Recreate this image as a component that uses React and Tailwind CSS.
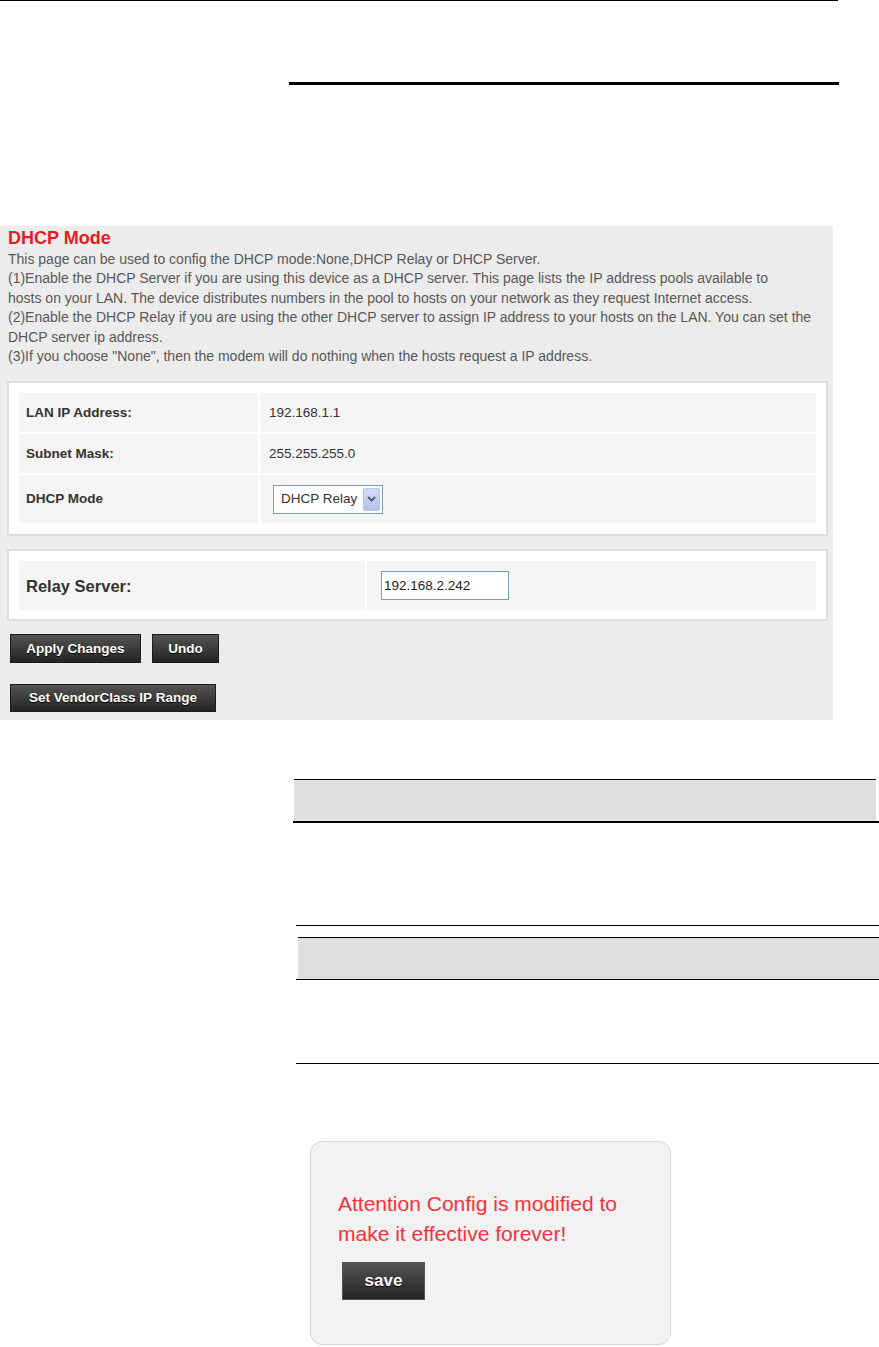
import React from "react";

const descLines = [
    "This page can be used to config the DHCP mode:None,DHCP Relay or DHCP Server.",
    "(1)Enable the DHCP Server if you are using this device as a DHCP server. This page lists the IP address pools available to",
    "hosts on your LAN. The device distributes numbers in the pool to hosts on your network as they request Internet access.",
    "(2)Enable the DHCP Relay if you are using the other DHCP server to assign IP address to your hosts on the LAN. You can set the",
    "DHCP server ip address.",
    '(3)If you choose "None", then the modem will do nothing when the hosts request a IP address.',
];

const DarkButton = ({ children, className = "" }) => (
    <button
        className={`flex items-center justify-center border border-[#1c1c1c] bg-linear-to-b from-[#545454] to-[#242424] text-white font-bold [text-shadow:0_1px_0_#000] ${className}`}
    >
        {children}
    </button>
);

const App = () => {
    return (
        <div className="w-[879px] h-[1347px] bg-white overflow-hidden font-['Liberation_Sans',Arial,sans-serif]">
            {/* Page rules */}
            <div className="h-px w-[838px] bg-black" />
            <div className="mt-[81px] ml-[289px] w-[550px] h-[3px] bg-black" />

            {/* DHCP Mode panel */}
            <div className="mt-[141px] w-[833px] h-[494px] bg-[#ececec]">
                <h1 className="pl-[8px] text-[18px] leading-[24px] font-bold text-[#e31b23]">DHCP Mode</h1>
                <div className="pl-[8px] text-[14px] leading-[19.4px] text-[#585858] whitespace-nowrap">
                    {descLines.map((line, i) => (
                        <div key={i}>{line}</div>
                    ))}
                </div>

                {/* LAN info */}
                <div className="mt-[15px] ml-[7px] w-[821px] border-2 border-[#dddddd] bg-white px-[10px] pt-[10px] pb-[11px]">
                    <div className="grid grid-cols-[239px_1fr] gap-[2px] text-[13.5px] text-[#333]">
                        <div className="h-[39px] bg-[#f5f5f5] pl-[7px] flex items-center font-bold">LAN IP Address:</div>
                        <div className="h-[39px] bg-[#f5f5f5] pl-[9px] flex items-center">192.168.1.1</div>
                        <div className="h-[39px] bg-[#f5f5f5] pl-[7px] flex items-center font-bold">Subnet Mask:</div>
                        <div className="h-[39px] bg-[#f5f5f5] pl-[9px] flex items-center">255.255.255.0</div>
                        <div className="h-[48px] bg-[#f5f5f5] pl-[7px] flex items-center font-bold">DHCP Mode</div>
                        <div className="h-[48px] bg-[#f5f5f5] pl-[13px] flex items-center">
                            <div className="relative w-[110px] h-[29px] border border-[#7f9db9] bg-white overflow-hidden flex items-center pl-[7px]">
                                <span className="whitespace-nowrap">DHCP Relay</span>
                                <div className="absolute right-[2px] top-[2px] w-[17px] h-[23px] rounded-[2px] border border-[#b8c6e6] bg-linear-to-b from-[#d3ddf4] to-[#b2c2ea] flex items-center justify-center">
                                    <svg width="9" height="6" viewBox="0 0 9 6">
                                        <path d="M1 1 L4.5 4.5 L8 1" fill="none" stroke="#4d6185" strokeWidth="2" />
                                    </svg>
                                </div>
                            </div>
                        </div>
                    </div>
                </div>

                {/* Relay server */}
                <div className="mt-[13px] ml-[7px] w-[821px] border-2 border-[#dddddd] bg-white px-[10px] pt-[10px] pb-[9px]">
                    <div className="grid grid-cols-[346px_1fr] gap-[2px] text-[#333]">
                        <div className="h-[49px] bg-[#f5f5f5] pl-[7px] flex items-center font-bold text-[16.5px]">Relay Server:</div>
                        <div className="h-[49px] bg-[#f5f5f5] pl-[14px] flex items-center">
                            <input
                                type="text"
                                defaultValue="192.168.2.242"
                                className="w-[128px] h-[29px] border border-[#7f9db9] bg-white px-[2px] text-[13.5px] text-[#222] outline-none"
                            />
                        </div>
                    </div>
                </div>

                {/* Buttons */}
                <div className="mt-[13px] ml-[10px] flex gap-[11px] text-[13.5px]">
                    <DarkButton className="w-[131px] h-[29px]">Apply Changes</DarkButton>
                    <DarkButton className="w-[67px] h-[29px]">Undo</DarkButton>
                </div>
                <div className="mt-[21px] ml-[10px] flex text-[13.5px]">
                    <DarkButton className="w-[206px] h-[28px]">Set VendorClass IP Range</DarkButton>
                </div>
            </div>

            {/* Table rules */}
            <div className="mt-[59px] ml-[294px] w-[582px] h-[42px] border-t border-black bg-[#e0e0e0]" />
            <div className="ml-[293px] w-[586px] h-[2px] bg-black" />
            <div className="mt-[102px] ml-[296px] w-[583px] h-px bg-black" />
            <div className="mt-[11px] ml-[298px] w-[581px] h-[42px] border-t border-black bg-[#e0e0e0]" />
            <div className="ml-[296px] w-[583px] h-px bg-black" />
            <div className="mt-[83px] ml-[296px] w-[583px] h-px bg-black" />

            {/* Save notice */}
            <div className="mt-[77px] ml-[310px] w-[361px] h-[204px] rounded-[12px] border border-[#d8d8d8] bg-[#f2f2f2] pl-[27px] pt-[47px]">
                <p className="text-[21px] leading-[30px] text-[#f7313a]">
                    Attention Config is modified to
                    <br />
                    make it effective forever!
                </p>
                <DarkButton className="mt-[13px] ml-[4px] w-[83px] h-[38px] text-[17px] border-[#555]">save</DarkButton>
            </div>
        </div>
    );
};

export default App;
